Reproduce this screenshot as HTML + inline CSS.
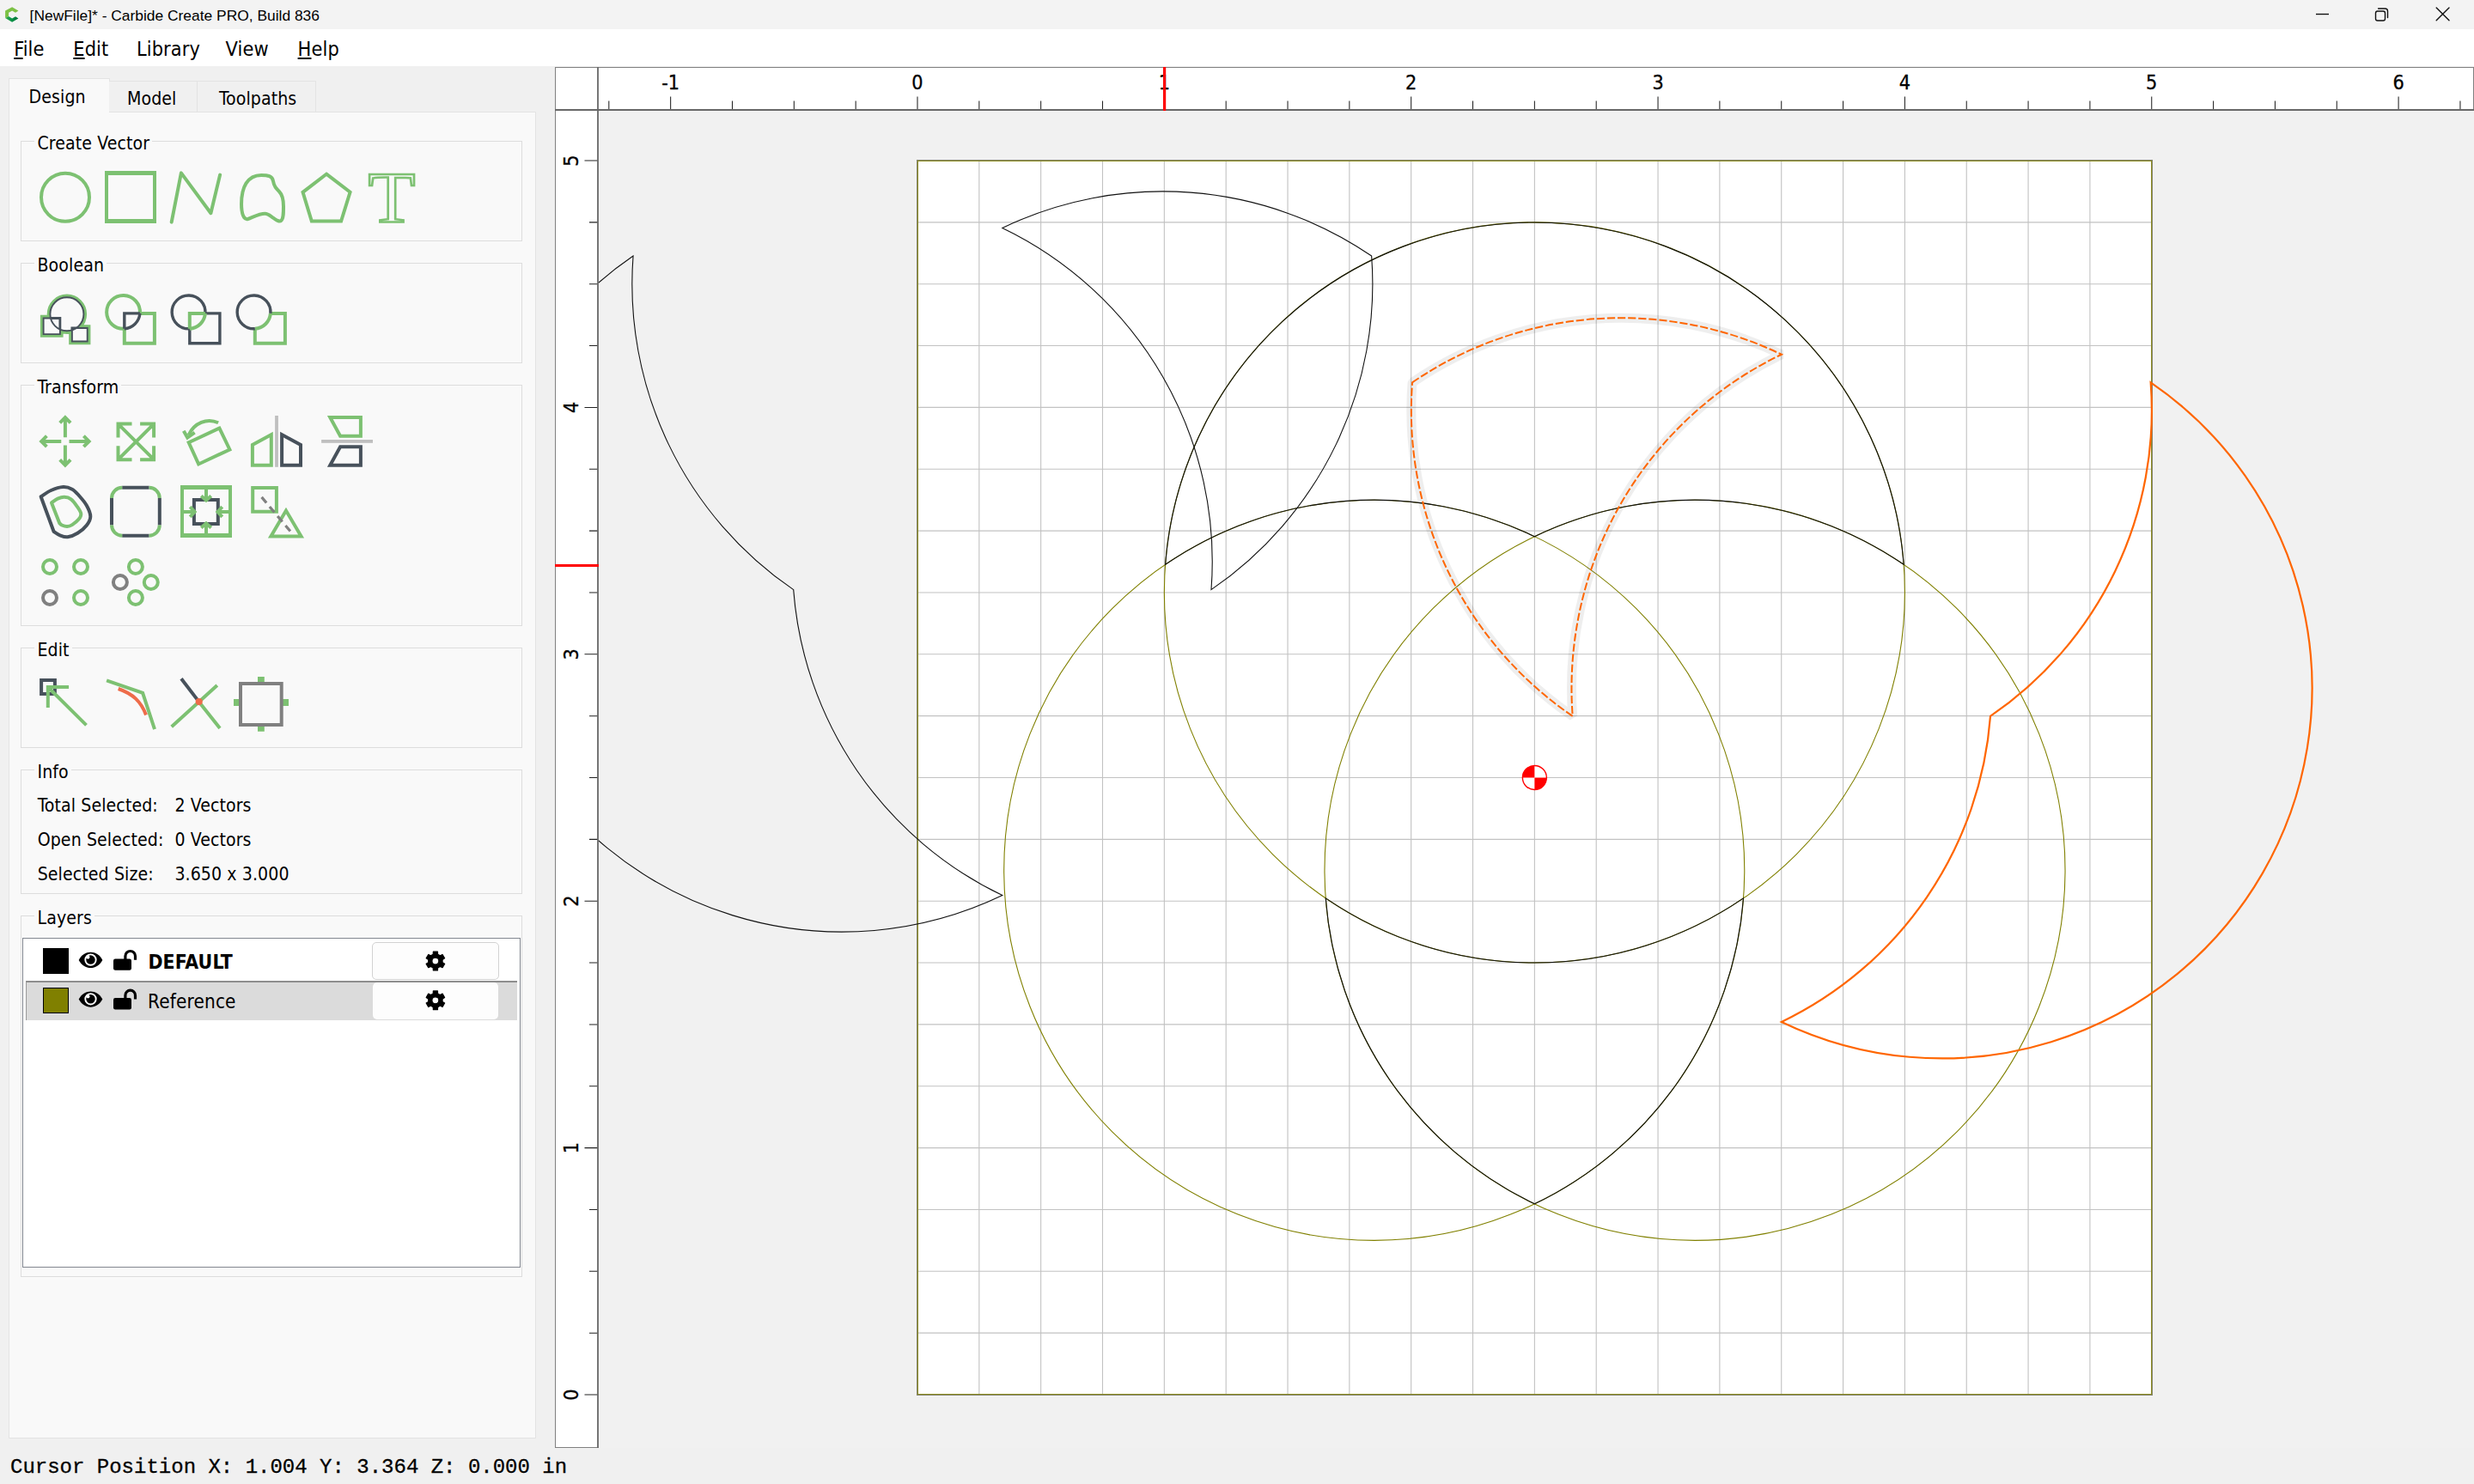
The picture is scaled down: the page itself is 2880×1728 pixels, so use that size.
<!DOCTYPE html>
<html lang="en"><head><meta charset="utf-8"><title>[NewFile]* - Carbide Create PRO, Build 836</title>
<style>
html,body{margin:0;padding:0}
body{width:2880px;height:1728px;position:relative;overflow:hidden;background:#f0f0f0;font-family:"DejaVu Sans Condensed","Liberation Sans",sans-serif;color:#000}
.abs{position:absolute;box-sizing:border-box}
.t{position:absolute;line-height:1;white-space:pre;letter-spacing:0.1px}
u{text-decoration:underline;text-decoration-thickness:1.5px;text-underline-offset:1.5px}
#title{left:0;top:0;width:2880px;height:34px;background:#f3f3f3}
#menu{left:0;top:34px;width:2880px;height:43px;background:#fff}
#pane{left:10px;top:130px;width:614px;height:1545px;background:#f9f9f9;border:1px solid #e3e3e3}
.tab{background:#f0f0f0;border:1px solid #e3e3e3;border-bottom:none}
.gb{border:1px solid #dddddd;left:24px;width:584px}
.gt{background:#f9f9f9;padding:0 3px 0 4px}
.rl{font-family:"DejaVu Sans Condensed","Liberation Sans",sans-serif;fill:#000;stroke:#000;stroke-width:0.3px}
#list{left:26px;top:1092px;width:580px;height:384px;background:#fff;border:1px solid #828790}
.btn{left:433px;width:148px;background:#fdfdfd;border-radius:5px}
#status{font-family:"Liberation Mono",monospace}
</style></head><body>
<div id="title" class="abs"></div>
<svg class="abs" style="left:0;top:0" width="40" height="34" viewBox="0 0 40 34"><defs><linearGradient id="lg" x1="0" y1="0" x2="1" y2="0"><stop offset="0" stop-color="#3aa84a"/><stop offset="0.45" stop-color="#0a9648"/><stop offset="1" stop-color="#006e36"/></linearGradient></defs>
<path d="M14.1 8.2L21.4 12.6L18 14.8L14.1 12.6L10.1 14.8V18.9L6.1 21.1V12.6Z" fill="#7cc144"/>
<path d="M6.1 21.1L10.1 18.9L14.1 21.4L18 19.2L21.4 21.4L14.1 25.8Z" fill="url(#lg)"/></svg>
<span class="t " style="left:34.6px;top:9.87px;font-size:17.4px;font-family:'Liberation Sans',sans-serif;letter-spacing:0">[NewFile]* - Carbide Create PRO, Build 836</span>
<svg class="abs" style="left:2680px;top:0" width="200" height="34" viewBox="2680 0 200 34" fill="none" stroke="#111" stroke-width="1.4">
<path d="M2696 16.5H2711"/><rect x="2765.5" y="13" width="11" height="11" rx="2.2"/><path d="M2768.6 10H2776.5A3 3 0 0 1 2779.5 13V20.6" stroke-linecap="round"/>
<path d="M2836.2 9L2851 23.8M2851 9L2836.2 23.8" stroke-linecap="round"/></svg>
<div id="menu" class="abs"></div>
<span class="t " style="left:16.2px;top:45.08px;font-size:23.3px;letter-spacing:0.1px"><u>F</u>ile</span>
<span class="t " style="left:85.3px;top:45.08px;font-size:23.3px;letter-spacing:0.1px"><u>E</u>dit</span>
<span class="t " style="left:159px;top:45.08px;font-size:23.3px;letter-spacing:0.1px">Library</span>
<span class="t " style="left:262.6px;top:45.08px;font-size:23.3px;letter-spacing:0.1px">View</span>
<span class="t " style="left:346.6px;top:45.08px;font-size:23.3px;letter-spacing:0.1px"><u>H</u>elp</span>
<div id="pane" class="abs"></div>
<div class="abs tab" style="left:10px;top:91px;width:118px;height:40px;background:#f9f9f9"></div>
<div class="abs tab" style="left:127px;top:94px;width:103px;height:36px;border-left:none"></div>
<div class="abs tab" style="left:229px;top:94px;width:139px;height:36px"></div>
<span class="t " style="left:33.6px;top:102.04px;font-size:21.1px;">Design</span>
<span class="t " style="left:148px;top:103.74px;font-size:21.1px;">Model</span>
<span class="t " style="left:254.9px;top:103.74px;font-size:21.1px;">Toolpaths</span>
<div class="abs gb" style="top:164px;height:117px"></div>
<span class="t gt" style="left:39.5px;top:156.14px;font-size:21.1px;">Create Vector</span>
<div class="abs gb" style="top:306px;height:117px"></div>
<span class="t gt" style="left:39.5px;top:298.14px;font-size:21.1px;">Boolean</span>
<div class="abs gb" style="top:448px;height:281px"></div>
<span class="t gt" style="left:39.5px;top:440.14px;font-size:21.1px;">Transform</span>
<div class="abs gb" style="top:754px;height:117px"></div>
<span class="t gt" style="left:39.5px;top:746.14px;font-size:21.1px;">Edit</span>
<div class="abs gb" style="top:896px;height:145px"></div>
<span class="t gt" style="left:39.5px;top:888.14px;font-size:21.1px;">Info</span>
<div class="abs gb" style="top:1066px;height:421px"></div>
<span class="t gt" style="left:39.5px;top:1058.14px;font-size:21.1px;">Layers</span>
<span class="t " style="left:43.7px;top:926.94px;font-size:21.1px;">Total Selected:</span>
<span class="t " style="left:203.4px;top:926.94px;font-size:21.1px;">2 Vectors</span>
<span class="t " style="left:43.7px;top:966.84px;font-size:21.1px;">Open Selected:</span>
<span class="t " style="left:203.4px;top:966.84px;font-size:21.1px;">0 Vectors</span>
<span class="t " style="left:43.7px;top:1006.74px;font-size:21.1px;">Selected Size:</span>
<span class="t " style="left:203.4px;top:1006.74px;font-size:21.1px;">3.650 x 3.000</span>
<div id="list" class="abs"></div>
<div class="abs" style="left:30px;top:1142px;width:572px;height:46px;background:#dbdbdb;border-top:2px solid #8e8e8e;border-left:1px solid #9a9a9a"></div>
<div class="abs" style="left:50px;top:1104px;width:30px;height:30px;background:#000"></div>
<div class="abs" style="left:50px;top:1150px;width:30px;height:30px;background:#808000;border:1px solid #000"></div>
<div class="abs btn" style="top:1097px;height:44px;border:1px solid #d2d2d2"></div>
<div class="abs btn" style="top:1144px;height:42.5px;left:434px;width:146px"></div>
<span class="t " style="left:172.4px;top:1108.6px;font-size:22.8px;font-weight:bold;letter-spacing:0.15px">DEFAULT</span>
<span class="t " style="left:172px;top:1154.62px;font-size:22.3px;letter-spacing:0.2px">Reference</span>
<svg class="abs" style="left:0;top:130px" width="640" height="1370" viewBox="0 130 640 1370">
<circle cx="76" cy="229.75" r="28" fill="none" stroke="#7dc172" stroke-width="4"/>
<path fill-rule="evenodd" fill="#7dc172" d="M122 199h60v61h-60zM126 204v51h52v-51z"/>
<path d="M199.7 258.6 L210.9 201.4 L245.4 248.2 L256.1 203.6" fill="none" stroke="#7dc172" stroke-width="4" stroke-linecap="round" stroke-linejoin="round"/>
<path d="M281.05 237.5C281.05 218 288 203.9 304.1 203.9C312 203.9 317 205 318 210.9C319 217 321.5 219.5 325 223C328.5 226.5 330 233 330 240.4C330 248 330 254 327.6 256.6C325.3 259 322 256.5 318 253.6C314 250.8 312 248.7 308.5 248.7C301 248.7 293.5 253.5 288.6 255C283.5 256.5 281.05 248 281.05 237.5Z" fill="none" stroke="#7dc172" stroke-width="4" stroke-linejoin="round"/>
<path d="M380 202.67 L407.56 223.78 L397.09 257.57 L362.82 257.58 L352.54 223.79Z" fill="none" stroke="#7dc172" stroke-width="4" stroke-linejoin="miter"/>
<text transform="translate(455.9 258.8) scale(1.06 1)" font-family="'Liberation Serif',serif" font-size="85" text-anchor="middle" fill="none" stroke="#7dc172" stroke-width="2.5">T</text>
<path d="M58.4 365.8a19.5 19.5 0 1 0 39 0a19.5 19.5 0 1 0 -39 0ZM50.6 370.5H69.9V389.1H50.6ZM83.9 382H101.7V397.5H83.9Z" fill="none" stroke="#7dc172" stroke-width="7.4" stroke-linejoin="miter"/>
<path d="M58.4 365.8a19.5 19.5 0 1 0 39 0a19.5 19.5 0 1 0 -39 0Z" fill="#f9f9f9" stroke="none"/>
<path d="M50.6 370.5H69.9V389.1H50.6Z" fill="#f9f9f9" stroke="none"/>
<path d="M83.9 382H101.7V397.5H83.9Z" fill="#f9f9f9" stroke="none"/>
<path d="M58.4 365.8a19.5 19.5 0 1 0 39 0a19.5 19.5 0 1 0 -39 0ZM50.6 370.5H69.9V389.1H50.6ZM83.9 382H101.7V397.5H83.9Z" fill="none" stroke="#47515b" stroke-width="1.9"/>
<clipPath id="wc"><circle cx="77.9" cy="365.8" r="20.3"/></clipPath>
<path d="M50.6 370.5H69.9V389.1H50.6ZM83.9 382H101.7V397.5H83.9Z" fill="none" stroke="#47515b" stroke-width="2.8" clip-path="url(#wc)"/>
<path d="M144.8 382.76A19.4 19.4 0 1 1 162.89 364.9" fill="none" stroke="#7dc172" stroke-width="4" stroke-linejoin="miter" stroke-linecap="butt"/>
<path d="M162.89 364.9 L179.9 364.9 L179.9 399.7 L144.8 399.7 L144.8 382.76" fill="none" stroke="#7dc172" stroke-width="4" stroke-linejoin="miter" stroke-linecap="butt"/>
<path d="M162.89 364.9A19.4 19.4 0 0 1 144.8 382.76" fill="none" stroke="#47515b" stroke-width="3.4" stroke-linejoin="miter" stroke-linecap="butt"/>
<path d="M162.89 364.9 L144.8 364.9 L144.8 382.76" fill="none" stroke="#47515b" stroke-width="3.4" stroke-linejoin="miter" stroke-linecap="butt"/>
<path d="M220.8 382.76A19.4 19.4 0 1 1 238.89 364.9" fill="none" stroke="#47515b" stroke-width="3.4" stroke-linejoin="miter" stroke-linecap="butt"/>
<path d="M238.89 364.9 L255.9 364.9 L255.9 399.7 L220.8 399.7 L220.8 382.76" fill="none" stroke="#47515b" stroke-width="3.4" stroke-linejoin="miter" stroke-linecap="butt"/>
<path d="M238.89 364.9A19.4 19.4 0 0 1 220.8 382.76" fill="none" stroke="#7dc172" stroke-width="4" stroke-linejoin="miter" stroke-linecap="butt"/>
<path d="M238.89 364.9 L220.8 364.9 L220.8 382.76" fill="none" stroke="#7dc172" stroke-width="4" stroke-linejoin="miter" stroke-linecap="butt"/>
<path d="M314.89 364.9 L331.9 364.9 L331.9 399.7 L296.8 399.7 L296.8 382.76" fill="none" stroke="#7dc172" stroke-width="4" stroke-linejoin="miter" stroke-linecap="butt"/>
<path d="M314.89 364.9A19.4 19.4 0 0 1 296.8 382.76" fill="none" stroke="#7dc172" stroke-width="4" stroke-linejoin="miter" stroke-linecap="butt"/>
<path d="M296.8 382.76A19.4 19.4 0 1 1 314.89 364.9" fill="none" stroke="#47515b" stroke-width="3.4" stroke-linejoin="miter" stroke-linecap="butt"/>
<path d="M75.9 509.3 L75.9 486.9M69.7 492.4 L75.9 486.2 L82.1 492.4M80.5 513.9 L102.9 513.9M97.4 507.7 L103.6 513.9 L97.4 520.1M75.9 518.5 L75.9 540.9M82.1 535.4 L75.9 541.6 L69.7 535.4M71.3 513.9 L48.9 513.9M54.4 520.1 L48.2 513.9 L54.4 507.7" fill="none" stroke="#7dc172" stroke-width="4" stroke-linejoin="miter" stroke-linecap="butt"/>
<path d="M137.5 493.6 L179.1 535.2M179.1 493.6 L137.5 535.2M153.5 493.6 L137.5 493.6 L137.5 509.6M163.1 493.6 L179.1 493.6 L179.1 509.6M153.5 535.2 L137.5 535.2 L137.5 519.2M163.1 535.2 L179.1 535.2 L179.1 519.2" fill="none" stroke="#7dc172" stroke-width="4" stroke-linejoin="miter"/>
<path d="M255.45 498.55 L267.4 523.5 L231.15 540.45 L219.7 515.3Z" fill="none" stroke="#7dc172" stroke-width="4" stroke-linejoin="miter"/>
<path d="M254.1 492.3C241 486.3 226 492.5 219.6 506.5" fill="none" stroke="#7dc172" stroke-width="4" />
<path d="M213.8 501.8 L218.2 509.6 L226.6 503.6" fill="none" stroke="#7dc172" stroke-width="4" stroke-linejoin="miter"/>
<rect x="320.1" y="484" width="3.8" height="59.8" fill="#bfbfbf"/>
<path d="M293.9 541.8 L293.9 518 L315.8 506.1 L315.8 541.8Z" fill="none" stroke="#7dc172" stroke-width="4" stroke-linejoin="miter"/>
<path d="M328.1 541.8 L328.1 506.1 L350 518 L350 541.8Z" fill="none" stroke="#47515b" stroke-width="4" stroke-linejoin="miter"/>
<rect x="374.1" y="512" width="59.9" height="3.8" fill="#bfbfbf"/>
<path d="M384.26 486 L419.9 486 L419.9 507.8 L396.1 507.8Z" fill="none" stroke="#7dc172" stroke-width="4" stroke-linejoin="miter"/>
<path d="M384.26 541.8 L419.9 541.8 L419.9 520.2 L396.1 520.2Z" fill="none" stroke="#47515b" stroke-width="4" stroke-linejoin="miter"/>
<path d="M47.6 578.3C49.57 577.08 55.07 572.87 59.4 571C63.73 569.13 69.5 567.32 73.6 567.1C77.7 566.88 80.98 568.08 84 569.7C87.02 571.32 88.9 573.67 91.7 576.8C94.5 579.93 98.53 584.4 100.8 588.5C103.07 592.6 105.3 597.53 105.3 601.4C105.3 605.27 103.28 608.47 100.8 611.7C98.32 614.93 94.07 618.53 90.4 620.8C86.73 623.07 82.23 624.87 78.8 625.3C75.37 625.73 72.5 624.45 69.8 623.4C67.1 622.35 63.8 619.73 62.6 619Z" fill="none" stroke="#47515b" stroke-width="4" stroke-linejoin="round"/>
<path d="M60 585.4C61.2 584.62 64.72 581.8 67.2 580.7C69.68 579.6 72.32 578.7 74.9 578.8C77.48 578.9 80.22 579.47 82.7 581.3C85.18 583.13 87.87 586.98 89.8 589.8C91.73 592.62 93.98 595.73 94.3 598.2C94.62 600.67 93.42 602.45 91.7 604.6C89.98 606.75 86.25 609.7 84 611.1C81.75 612.5 80.2 612.93 78.2 613C76.2 613.07 73.48 612.13 72 611.5C70.52 610.87 69.75 609.58 69.3 609.2Z" fill="none" stroke="#7dc172" stroke-width="4" stroke-linejoin="round"/>
<path d="M142.2 567.8H173.6M142.2 623.7H173.6M130 580V611.5M185.8 580V611.5" fill="none" stroke="#47515b" stroke-width="4" />
<path d="M130 580A12.2 12.2 0 0 1 142.2 567.8M173.6 567.8A12.2 12.2 0 0 1 185.8 580M185.8 611.5A12.2 12.2 0 0 1 173.6 623.7M142.2 623.7A12.2 12.2 0 0 1 130 611.5" fill="none" stroke="#7dc172" stroke-width="4" />
<path fill-rule="evenodd" fill="#7dc172" d="M210 565h60v61h-60zM214 570v51h52v-51z"/>
<path d="M225.9 582H253.8V610H225.9Z" fill="none" stroke="#47515b" stroke-width="4" />
<path d="M240 569V583M240 622V609M213 596H227M267 596H253M234.2 577.4L240 582.6L245.8 577.4M234.2 614.6L240 609.4L245.8 614.6M221.3 590.2L226.6 596L221.3 601.8M258.7 590.2L253.4 596L258.7 601.8" fill="none" stroke="#7dc172" stroke-width="4" stroke-linejoin="miter"/>
<path d="M294.2 568.1H321.9V595.8H294.2Z" fill="none" stroke="#7dc172" stroke-width="4" />
<path d="M333 594.6 L315.4 624.6 L350.6 624.6Z" fill="none" stroke="#7dc172" stroke-width="4" stroke-linejoin="miter"/>
<path d="M304.6 578.9L338.2 618.9" stroke="#808080" stroke-width="3.2" stroke-dasharray="8.6 5.8" fill="none"/>
<circle cx="58" cy="660" r="8" fill="none" stroke="#7dc172" stroke-width="4"/>
<circle cx="94" cy="660" r="8" fill="none" stroke="#7dc172" stroke-width="4"/>
<circle cx="58" cy="696" r="8" fill="none" stroke="#808080" stroke-width="4"/>
<circle cx="94" cy="696" r="8" fill="none" stroke="#7dc172" stroke-width="4"/>
<circle cx="157.9" cy="660" r="8" fill="none" stroke="#7dc172" stroke-width="4"/>
<circle cx="175.8" cy="678" r="8" fill="none" stroke="#7dc172" stroke-width="4"/>
<circle cx="157.9" cy="696" r="8" fill="none" stroke="#7dc172" stroke-width="4"/>
<circle cx="139.9" cy="678" r="8" fill="none" stroke="#808080" stroke-width="4"/>
<path d="M48.1 792.1H63.9V808H48.1Z" fill="none" stroke="#47515b" stroke-width="4" />
<path d="M80.1 800H55.8V824M55.8 800L100.5 844.4" fill="none" stroke="#7dc172" stroke-width="4" stroke-linejoin="miter"/>
<path d="M124.1 792.3L166.1 806.9L180 849.2" fill="none" stroke="#7dc172" stroke-width="4" stroke-linejoin="miter"/>
<path d="M137.7 802C155 808 164 817 170 832.4" fill="none" stroke="#ee6c4a" stroke-width="4" />
<path d="M252.8 797.9L199.7 846.2M231.4 816.9L256 847.9" fill="none" stroke="#7dc172" stroke-width="4" />
<path d="M211 790.3L231.4 816.9" fill="none" stroke="#47515b" stroke-width="4" />
<circle cx="231.7" cy="817.1" r="4.1" fill="#ee6c4a"/>
<path d="M300 788h7.8v7h-7.8zM300 845h7.8v6.8h-7.8zM272 814h7v8h-7zM329 814h7v8h-7z" fill="#7dc172"/>
<path d="M280 796H327.7V844H280Z" fill="none" stroke="#808080" stroke-width="4" />
<path d="M91.7 1117.9C97.91 1105.86 113.09 1105.86 119.3 1117.9C113.09 1129.94 97.91 1129.94 91.7 1117.9Z" fill="#000"/><circle cx="105.5" cy="1117.6" r="6.2" fill="#000" stroke="#fff" stroke-width="1.9"/><circle cx="102.4" cy="1114.6" r="2.1" fill="#fff"/>
<rect x="132" y="1116.4" width="21" height="13.4" rx="2.2" fill="#000"/><path d="M145.9 1117.4V1113.3A5.8 5.8 0 0 1 157.5 1113.3V1117.7" fill="none" stroke="#000" stroke-width="3.2"/>
<path d="M504.38 1108.19 L509.42 1108.19 L509.6 1111.25 L512.35 1112.84 L515.09 1111.46 L517.61 1115.83 L515.05 1117.52 L515.05 1120.68 L517.61 1122.37 L515.09 1126.74 L512.35 1125.36 L509.6 1126.95 L509.42 1130.01 L504.38 1130.01 L504.2 1126.95 L501.45 1125.36 L498.71 1126.74 L496.19 1122.37 L498.75 1120.68 L498.75 1117.52 L496.19 1115.83 L498.71 1111.46 L501.45 1112.84 L504.2 1111.25ZM502.9 1119.1a4 4 0 1 0 8 0a4 4 0 1 0 -8 0Z" fill="#000" fill-rule="evenodd" stroke="#000" stroke-width="1.2" stroke-linejoin="round"/>
<path d="M91.7 1163.6C97.91 1151.56 113.09 1151.56 119.3 1163.6C113.09 1175.64 97.91 1175.64 91.7 1163.6Z" fill="#000"/><circle cx="105.5" cy="1163.3" r="6.2" fill="#000" stroke="#fff" stroke-width="1.9"/><circle cx="102.4" cy="1160.3" r="2.1" fill="#fff"/>
<rect x="132" y="1162.1" width="21" height="13.4" rx="2.2" fill="#000"/><path d="M145.9 1163.1V1159A5.8 5.8 0 0 1 157.5 1159V1163.4" fill="none" stroke="#000" stroke-width="3.2"/>
<path d="M504.38 1153.89 L509.42 1153.89 L509.6 1156.95 L512.35 1158.54 L515.09 1157.16 L517.61 1161.53 L515.05 1163.22 L515.05 1166.38 L517.61 1168.07 L515.09 1172.44 L512.35 1171.06 L509.6 1172.65 L509.42 1175.71 L504.38 1175.71 L504.2 1172.65 L501.45 1171.06 L498.71 1172.44 L496.19 1168.07 L498.75 1166.38 L498.75 1163.22 L496.19 1161.53 L498.71 1157.16 L501.45 1158.54 L504.2 1156.95ZM502.9 1164.8a4 4 0 1 0 8 0a4 4 0 1 0 -8 0Z" fill="#000" fill-rule="evenodd" stroke="#000" stroke-width="1.2" stroke-linejoin="round"/>
</svg>
<svg id="cv" width="2234" height="1610" viewBox="646 78 2234 1610" style="position:absolute;left:646px;top:78px">
<defs><clipPath id="cvclip"><rect x="697" y="129" width="2183" height="1556"/></clipPath></defs>
<rect x="697" y="129" width="2183" height="1556.5" fill="#f1f1f1"/>
<g clip-path="url(#cvclip)">
<rect x="1068" y="187" width="1436.75" height="1437" fill="#fff"/>
<path d="M1139.84 187V1624M1068 1552.15H2504.75M1211.67 187V1624M1068 1480.3H2504.75M1283.51 187V1624M1068 1408.45H2504.75M1355.35 187V1624M1068 1336.6H2504.75M1427.19 187V1624M1068 1264.75H2504.75M1499.03 187V1624M1068 1192.9H2504.75M1570.86 187V1624M1068 1121.05H2504.75M1642.7 187V1624M1068 1049.2H2504.75M1714.54 187V1624M1068 977.35H2504.75M1786.38 187V1624M1068 905.5H2504.75M1858.21 187V1624M1068 833.65H2504.75M1930.05 187V1624M1068 761.8H2504.75M2001.89 187V1624M1068 689.95H2504.75M2073.73 187V1624M1068 618.1H2504.75M2145.56 187V1624M1068 546.25H2504.75M2217.4 187V1624M1068 474.4H2504.75M2289.24 187V1624M1068 402.55H2504.75M2361.07 187V1624M1068 330.7H2504.75M2432.91 187V1624M1068 258.85H2504.75" stroke="#c2c2c2" stroke-width="1.1" fill="none"/>
<rect x="1067.5" y="186.5" width="1438" height="1438" fill="none" stroke="#84846e" stroke-width="1"/>
<rect x="1068.5" y="187.5" width="1436" height="1436" fill="none" stroke="#8c8c22" stroke-width="1"/>
<ellipse cx="1786.38" cy="689.95" rx="431.03" ry="431.1" fill="none" stroke="#808000" stroke-width="1.1"/>
<ellipse cx="1599.74" cy="1013.28" rx="431.03" ry="431.1" fill="none" stroke="#808000" stroke-width="1.1"/>
<ellipse cx="1973.01" cy="1013.28" rx="431.03" ry="431.1" fill="none" stroke="#808000" stroke-width="1.1"/>
<path d="M1356.59 657.32A431.03 431.1 0 0 1 2216.16 657.32A431.03 431.1 0 0 0 1786.38 624.69A431.03 431.1 0 0 0 1356.59 657.32Z" fill="none" stroke="#111" stroke-width="1.1" stroke-linejoin="miter"/>
<path d="M1543.23 1045.91A431.03 431.1 0 0 0 2029.52 1045.91A431.03 431.1 0 0 1 1786.38 1401.86A431.03 431.1 0 0 1 1543.23 1045.91Z" fill="none" stroke="#111" stroke-width="1.1" stroke-linejoin="miter"/>
<path d="M1596.64 298.07A431.03 431.1 0 0 0 1166.85 265.44A431.03 431.1 0 0 1 1410 686.66A431.03 431.1 0 0 0 1596.64 298.07Z" fill="none" stroke="#111" stroke-width="1.1" stroke-linejoin="miter"/>
<path d="M737.06 298.07A431.03 431.1 0 0 0 923.7 686.66A431.03 431.1 0 0 0 1166.85 1042.61A431.03 431.1 0 0 1 737.06 298.07Z" fill="none" stroke="#111" stroke-width="1.1" stroke-linejoin="miter"/>
<path d="M1644.08 445.36A431.03 431.1 0 0 1 2073.87 412.73A431.03 431.1 0 0 0 1830.72 833.95A431.03 431.1 0 0 1 1644.08 445.36Z" fill="none" stroke="#000" stroke-opacity="0.065" stroke-width="11" stroke-linejoin="bevel"/>
<path d="M1644.08 445.36A431.03 431.1 0 0 1 2073.87 412.73A431.03 431.1 0 0 0 1830.72 833.95A431.03 431.1 0 0 1 1644.08 445.36Z" fill="none" stroke="#ff6600" stroke-width="2" stroke-dasharray="9.2 2.9"/>
<path d="M2503.66 445.36A431.03 431.1 0 0 1 2317.02 833.95A431.03 431.1 0 0 1 2073.87 1189.91A431.03 431.1 0 0 0 2503.66 445.36Z" fill="none" stroke="#ff6600" stroke-width="2.2"/>
<circle cx="1786.38" cy="905.5" r="14" fill="#fff" stroke="#f00" stroke-width="1.4"/>
<path d="M1786.38 905.5V891.5A14 14 0 0 0 1772.38 905.5Z" fill="#f00"/>
<path d="M1786.38 905.5V919.5A14 14 0 0 0 1800.38 905.5Z" fill="#f00"/>
</g>
<rect x="646" y="78" width="2234" height="50" fill="#fff"/>
<rect x="646" y="78" width="50" height="1607" fill="#fff"/>
<path d="M708.81 117.5V128M780.65 112.5V128M852.49 117.5V128M924.33 117.5V128M996.16 117.5V128M1068 112.5V128M1139.84 117.5V128M1211.67 117.5V128M1283.51 117.5V128M1355.35 112.5V128M1427.19 117.5V128M1499.03 117.5V128M1570.86 117.5V128M1642.7 112.5V128M1714.54 117.5V128M1786.38 117.5V128M1858.21 117.5V128M1930.05 112.5V128M2001.89 117.5V128M2073.73 117.5V128M2145.56 117.5V128M2217.4 112.5V128M2289.24 117.5V128M2361.07 117.5V128M2432.91 117.5V128M2504.75 112.5V128M2576.59 117.5V128M2648.43 117.5V128M2720.26 117.5V128M2792.1 112.5V128M2863.94 117.5V128M680.5 187H696M686 258.85H696M686 330.7H696M686 402.55H696M680.5 474.4H696M686 546.25H696M686 618.1H696M686 689.95H696M680.5 761.8H696M686 833.65H696M686 905.5H696M686 977.35H696M680.5 1049.2H696M686 1121.05H696M686 1192.9H696M686 1264.75H696M680.5 1336.6H696M686 1408.45H696M686 1480.3H696M686 1552.15H696M680.5 1624H696" stroke="#222" stroke-width="1.05" fill="none"/>
<text x="780.65" y="104" font-size="23.2" text-anchor="middle" class="rl">-1</text>
<text x="1068" y="104" font-size="23.2" text-anchor="middle" class="rl">0</text>
<text x="1355.35" y="104" font-size="23.2" text-anchor="middle" class="rl">1</text>
<text x="1642.7" y="104" font-size="23.2" text-anchor="middle" class="rl">2</text>
<text x="1930.05" y="104" font-size="23.2" text-anchor="middle" class="rl">3</text>
<text x="2217.4" y="104" font-size="23.2" text-anchor="middle" class="rl">4</text>
<text x="2504.75" y="104" font-size="23.2" text-anchor="middle" class="rl">5</text>
<text x="2792.1" y="104" font-size="23.2" text-anchor="middle" class="rl">6</text>
<text transform="translate(672.6 1624) rotate(-90)" font-size="23.2" text-anchor="middle" class="rl">0</text>
<text transform="translate(672.6 1336.6) rotate(-90)" font-size="23.2" text-anchor="middle" class="rl">1</text>
<text transform="translate(672.6 1049.2) rotate(-90)" font-size="23.2" text-anchor="middle" class="rl">2</text>
<text transform="translate(672.6 761.8) rotate(-90)" font-size="23.2" text-anchor="middle" class="rl">3</text>
<text transform="translate(672.6 474.4) rotate(-90)" font-size="23.2" text-anchor="middle" class="rl">4</text>
<text transform="translate(672.6 187) rotate(-90)" font-size="23.2" text-anchor="middle" class="rl">5</text>
<path d="M646 78.5H2880M646.5 78V1686M646 1685.5H697M2879.5 78V129" stroke="#808080" stroke-width="1" fill="none"/>
<path d="M646 128H2880M696 78V1686" stroke="#686868" stroke-width="1.8" fill="none"/>
<rect x="1354" y="78" width="3.2" height="51" fill="#f00"/>
<rect x="646" y="657" width="51" height="3" fill="#f00"/>
</svg>
<span class="t " style="left:12px;top:1696.68px;font-size:24px;font-family:'Liberation Mono',monospace;letter-spacing:0;-webkit-text-stroke:0.3px #000">Cursor Position X: 1.004 Y: 3.364 Z: 0.000 in</span>
</body></html>
